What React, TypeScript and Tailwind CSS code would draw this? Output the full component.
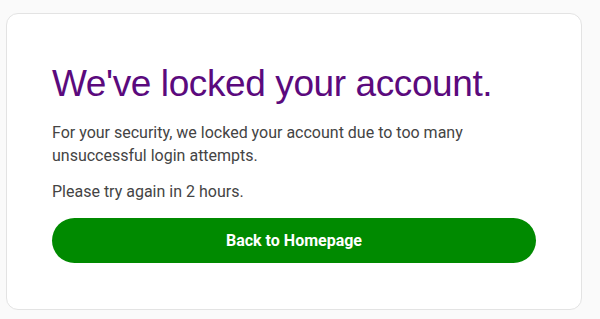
import React from "react";

export default function App() {
  return (
    <div className="w-[600px] h-[319px] bg-[#fafafa] pt-[13px] pl-[6px]">
      <div className="flex flex-col items-start w-[576px] h-[297px] bg-white border border-[#e3e3e3] rounded-[12px] px-[45px] pt-[48px] font-['Roboto',sans-serif]">
        <h1 className="text-[37px] leading-[44px] text-[#5b0a7d] tracking-[-0.4px] font-['Liberation_Sans',Arial,sans-serif]">
          We've locked your account.
        </h1>
        <p className="mt-[15px] text-[16px] leading-[23px] text-[#444]">
          For your security, we locked your account due to too many unsuccessful login attempts.
        </p>
        <p className="mt-[13px] text-[16px] leading-[23px] text-[#444]">
          Please try again in 2 hours.
        </p>
        <button className="mt-[15px] w-[484px] h-[45px] rounded-full bg-[#008a00] text-white text-[16px] font-bold">
          Back to Homepage
        </button>
      </div>
    </div>
  );
}
